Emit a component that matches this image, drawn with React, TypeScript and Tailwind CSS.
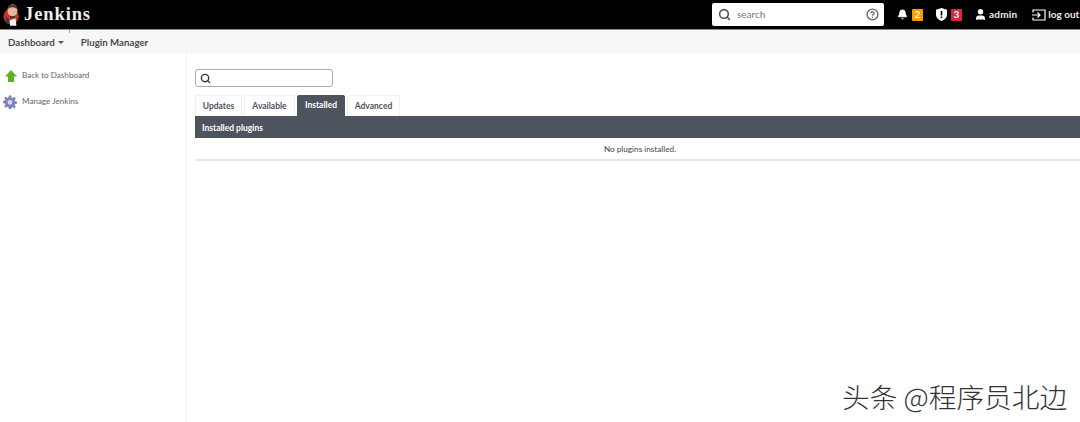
import { Bell, CircleHelp, Search, User } from "lucide-react";

const tabs = [
  { label: "Updates", width: "w-[47px]" },
  { label: "Available", width: "w-[51px]" },
  { label: "Installed", width: "w-[48px]" },
  { label: "Advanced", width: "w-[53px]" },
];

const JenkinsLogo = () => (
  <svg width="18" height="24" viewBox="0 0 20 26">
    <circle cx="9" cy="14.500" r="8.500" fill="#c8342c" />
    <ellipse cx="10.500" cy="8" rx="5.500" ry="7" fill="#e8b598" />
    <path d="M5 5c1-4 9-5 11 0l-1 1c-3-2-6-2-9 0z" fill="#4a3a30" />
    <path d="M7 13c2 2 5 2 7 0l-1 3h-5z" fill="#3a2c28" />
    <path d="M7 19l7-2 1 8H8z" fill="#f2f2f2" />
    <path d="M3 15l4 3v5H4z" fill="#2e3a55" />
  </svg>
);

const GearIcon = () => (
  <svg width="14" height="14" viewBox="0 0 24 24">
    <path
      fill="#7f82b8"
      d="M10 1h4l.6 3.200 2 .8L19.300 3 22 5.800l-2 2.700.9 2 3.100.6v3.800l-3.100.6-.9 2 2 2.700-2.700 2.800-2.700-2-2 .8L14 24h-4l-.6-3.200-2-.8L4.700 22 2 19.200l2-2.700-.9-2-3.100-.6v-3.800l3.100-.6.9-2-2-2.700L4.700 3l2.700 2 2-.8z"
    />
    <circle cx="12" cy="12.500" r="4" fill="#d5d6ea" />
  </svg>
);

const UpArrowIcon = () => (
  <svg width="12" height="12" viewBox="0 0 12 12">
    <path d="M6 0L12 6.500H9V12H3V6.500H0z" fill="#5fb01e" />
  </svg>
);

const ShieldIcon = () => (
  <svg width="11" height="13" viewBox="0 0 11 13">
    <path d="M5.500 0L11 1.800V6.500C11 9.800 8.500 12 5.500 13 2.500 12 0 9.800 0 6.500V1.800z" fill="#fff" />
    <rect x="4.700" y="3" width="1.600" height="4.500" fill="#000" />
    <rect x="4.700" y="8.500" width="1.600" height="1.600" fill="#000" />
  </svg>
);

const LogoutIcon = () => (
  <svg width="14" height="12" viewBox="0 0 14 12" fill="none" stroke="#fff" strokeWidth="1.200">
    <path d="M1 3.500V1h12v10H1V8.500" />
    <path d="M0 6h8M5.500 3.500L8 6 5.500 8.500" />
  </svg>
);

export default function App() {
  return (
    <div className="relative h-[422px] w-[1080px] overflow-hidden bg-white font-['Lato','Liberation_Sans',sans-serif] text-[#333]">
      {/* header */}
      <header className="flex h-[30px] items-center overflow-hidden border-b border-[#888] bg-black text-white">
        <div className="ml-[3px] flex w-[88px] shrink-0 items-center gap-[3px]">
          <JenkinsLogo />
          <span className="font-['Liberation_Serif',serif] text-[18.500px] font-bold tracking-[0.9px] text-[#eee]">Jenkins</span>
        </div>
        <div className="ml-[621px] flex h-[23px] w-[172px] shrink-0 items-center rounded-[2px] bg-white pl-[6px] pr-[5px]">
          <Search size={13} strokeWidth={3} className="text-[#555]" />
          <span className="ml-[6px] flex-1 text-[10px] text-[#777]">search</span>
          <CircleHelp size={13} strokeWidth={2.5} className="text-[#666]" />
        </div>
        <div className="ml-[13px] flex shrink-0 items-center text-[10px] font-bold">
          <Bell size={11} fill="white" />
          <span className="ml-[4px] flex h-[12px] w-[11px] items-center justify-center rounded-[1px] bg-[#fe9a00]">2</span>
          <span className="ml-[13px]"><ShieldIcon /></span>
          <span className="ml-[4px] flex h-[12px] w-[11px] items-center justify-center rounded-[1px] bg-[#d9263f]">3</span>
          <User size={13} fill="white" className="ml-[12px]" />
          <span className="ml-[2px] tracking-[0.2px] text-[#eee]">admin</span>
          <span className="ml-[15px]"><LogoutIcon /></span>
          <span className="ml-[2px] whitespace-nowrap text-[#eee]">log out</span>
        </div>
      </header>

      {/* breadcrumbs */}
      <nav className="relative flex h-[23px] items-center bg-[#f7f7f7] pl-[8px] pt-[1px] text-[9.700px] font-bold text-[#4a4a4a]">
        <span>Dashboard</span>
        <span className="ml-[3px] h-0 w-0 border-x-[3px] border-t-[3px] border-x-transparent border-t-[#555]" />
        <span className="ml-[17px]">Plugin Manager</span>
        <span className="absolute left-[69px] top-0 h-[3px] w-px bg-[#aaa]" />
      </nav>

      <div className="flex h-[369px]">
        {/* sidebar */}
        <aside className="w-[187px] shrink-0 border-r border-[#f0f0f0] pl-[3px] pt-[15px] text-[8.100px] text-[#666]">
          <div className="flex h-[15px] items-center">
            <span className="ml-[2px]"><UpArrowIcon /></span>
            <span className="ml-[5px]">Back to Dashboard</span>
          </div>
          <div className="mt-[11px] flex h-[15px] items-center">
            <GearIcon />
            <span className="ml-[5px]">Manage Jenkins</span>
          </div>
        </aside>

        {/* main */}
        <main className="min-w-0 flex-1 pl-[8px] pt-[16px]">
          <div className="flex h-[18px] w-[138px] items-center rounded-[3px] border border-[#aaa] pl-[4px]">
            <Search size={11} strokeWidth={3} className="text-[#333]" />
          </div>
          <div className="mt-[8px] flex h-[21px] items-stretch gap-[2px] text-[8.500px] font-bold">
            {tabs.map((tab) => (
              <div
                key={tab.label}
                className={
                  tab.label === "Installed"
                    ? `flex ${tab.width} items-center justify-center rounded-t-[2px] bg-[#4d545d] text-white`
                    : `flex ${tab.width} items-center justify-center rounded-t-[2px] border border-b-0 border-[#f0f0f0] text-[#4d545d]`
                }
              >
                {tab.label}
              </div>
            ))}
          </div>
          <div className="flex h-[22px] items-center bg-[#4d545d] pl-[7px] pt-[2px] text-[8.500px] font-bold text-white">Installed plugins</div>
          <div className="flex h-[23px] items-center justify-center border-b-2 border-[#e4e8ea] pl-[5px] pt-[2px] text-[8.200px] text-[#444]">No plugins installed.</div>
        </main>
      </div>

      {/* watermark */}
      <div className="absolute left-[842px] top-[380px] whitespace-nowrap font-['Noto_Sans_CJK_SC',sans-serif] text-[27.700px] font-light leading-[32px] text-[#333]">
        头条 @程序员北边
      </div>
    </div>
  );
}
